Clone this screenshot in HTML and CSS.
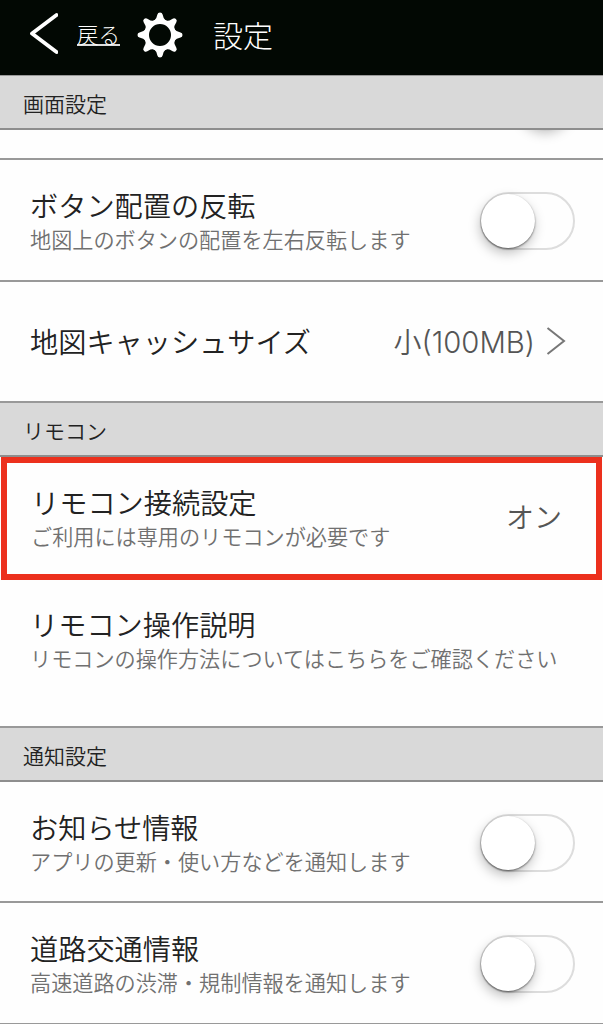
FILE: index.html
```html
<!DOCTYPE html>
<html lang="ja">
<head>
  <meta charset="UTF-8" />
  <meta name="viewport" content="width=device-width, initial-scale=1" />
  <title>設定</title>
  <link rel="stylesheet" href="styles.css">
</head>
<body>
  <header class="header">
    <a class="back" href="#">
      <svg class="back-icon" width="30" height="44" viewBox="0 0 30 44">
        <path d="M28.500 3 L4 21.500 L28.500 40" fill="none" stroke="#fff" stroke-width="3.800" stroke-linecap="round" stroke-linejoin="round" />
      </svg>
      <span class="back-label">戻る</span>
    </a>
    <svg class="gear" width="46" height="46" viewBox="-23 -23 46 46" fill="#fff">
      <defs>
        <path id="tooth" d="M-6 -14 Q-3.200 -16.500 -2.600 -20.500 Q-2.200 -22.500 0 -22.500 Q2.200 -22.500 2.600 -20.500 Q3.200 -16.500 6 -14 Z" />
      </defs>
      <circle r="13.500" fill="none" stroke="#fff" stroke-width="5" />
      <use href="#tooth" />
      <use href="#tooth" transform="rotate(45)" />
      <use href="#tooth" transform="rotate(90)" />
      <use href="#tooth" transform="rotate(135)" />
      <use href="#tooth" transform="rotate(180)" />
      <use href="#tooth" transform="rotate(225)" />
      <use href="#tooth" transform="rotate(270)" />
      <use href="#tooth" transform="rotate(315)" />
    </svg>
    <h1 class="header-title">設定</h1>
  </header>

  <main>
    <!-- Display -->
    <h2 class="section-header">画面設定</h2>
    <div class="row row-scrolled">
      <div class="switch switch-on"><div class="knob"></div></div>
    </div>
    <div class="row">
      <div class="row-text">
        <div class="row-title">ボタン配置の反転</div>
        <div class="row-desc">地図上のボタンの配置を左右反転します</div>
      </div>
      <div class="switch"><div class="knob"></div></div>
    </div>
    <div class="row row-last">
      <div class="row-title">地図キャッシュサイズ</div>
      <div class="row-value">
        <span>小<span class="size">(100MB)</span></span>
        <svg class="chevron" width="20" height="30" viewBox="0 0 20 30">
          <path d="M1.500 2 L18 15 L1.500 28" fill="none" stroke="#777" stroke-width="2" />
        </svg>
      </div>
    </div>

    <!-- Remote control -->
    <h2 class="section-header">リモコン</h2>
    <div class="row row-highlight">
      <div class="row-text">
        <div class="row-title">リモコン接続設定</div>
        <div class="row-desc">ご利用には専用のリモコンが必要です</div>
      </div>
      <div class="row-value">オン</div>
    </div>
    <div class="row row-help">
      <div class="row-text">
        <div class="row-title">リモコン操作説明</div>
        <div class="row-desc">リモコンの操作方法についてはこちらをご確認ください</div>
      </div>
    </div>

    <!-- Notifications -->
    <h2 class="section-header">通知設定</h2>
    <div class="row">
      <div class="row-text">
        <div class="row-title">お知らせ情報</div>
        <div class="row-desc">アプリの更新・使い方などを通知します</div>
      </div>
      <div class="switch"><div class="knob"></div></div>
    </div>
    <div class="row">
      <div class="row-text">
        <div class="row-title">道路交通情報</div>
        <div class="row-desc">高速道路の渋滞・規制情報を通知します</div>
      </div>
      <div class="switch"><div class="knob"></div></div>
    </div>
  </main>
</body>
</html>
```

FILE: styles.css
```css
* {
  box-sizing: border-box;
}

body {
  margin: 0;
  height: 1024px;
  overflow: hidden;
  background: #fefefe;
  color: #222;
  font-family: "Noto Sans CJK JP", sans-serif;
  font-weight: 350;
}

/* Header */
.header {
  display: flex;
  align-items: center;
  height: 75px;
  padding: 0 0 5px 28px;
  background: #020803;
  color: #fff;
}

.back {
  display: flex;
  align-items: center;
  color: #fff;
  text-decoration: none;
}

.back-icon {
  margin-top: -2px;
}

.back-label {
  margin-left: 19px;
  border-bottom: 2px solid #ddd;
  font-size: 21.5px;
  font-weight: 300;
  line-height: 20px;
}

.gear {
  margin-left: 17px;
}

.header-title {
  margin: 0 0 3px 30px;
  font-size: 30px;
  font-weight: 300;
  line-height: 40px;
}

/* Grey section bars */
.section-header {
  display: flex;
  align-items: center;
  height: 55px;
  margin: 0;
  padding: 2px 0 0 23px;
  border-top: 1px solid #999;
  border-bottom: 2px solid #8e8e8e;
  background: #d9d9d9;
  font-size: 21px;
  font-weight: 350;
}

/* Rows */
.row {
  display: flex;
  align-items: center;
  justify-content: space-between;
  height: 121.5px;
  padding: 3px 28.5px 0 30px;
  border-bottom: 2px solid #999;
}

.row-scrolled {
  height: 30px;
  align-items: flex-end;
  justify-content: flex-end;
  padding: 0 28px 28px 0;
  overflow: hidden;
}

.row-last {
  height: 120.5px;
  padding: 0 37px 0 30px;
  border-bottom: 1px solid #999;
}

.row-highlight {
  height: 122.5px;
  margin: 0 1px;
  padding: 0 34px 1px 24px;
  border: 6px solid #ec301d;
}

.row-help {
  height: 147px;
  padding: 0 28px 25px 30px;
  border-bottom: 1px solid #999;
}

.row-title {
  font-size: 28.2px;
  line-height: 36px;
}

.row-desc {
  color: #707070;
  font-size: 21.15px;
  line-height: 32px;
}

.row-value {
  display: flex;
  align-items: center;
  color: #555;
  font-size: 28px;
}

.row-highlight .row-value {
  margin-top: -4px;
}

.size {
  font-family: Inter, sans-serif;
  font-size: 29.3px;
}

.chevron {
  margin-left: 11px;
}

/* Switches */
.switch {
  display: flex;
  flex-shrink: 0;
  width: 95px;
  height: 58px;
  border: 2px solid #ddd;
  border-radius: 29px;
}

.knob {
  width: 54px;
  height: 54px;
  margin-left: -1px;
  border-radius: 50%;
  background: #fff;
  box-shadow: 0 1px 2px rgba(0, 0, 0, 0.5), -1px 5px 12px rgba(0, 0, 0, 0.25);
}

.switch-on {
  justify-content: flex-end;
}
```
